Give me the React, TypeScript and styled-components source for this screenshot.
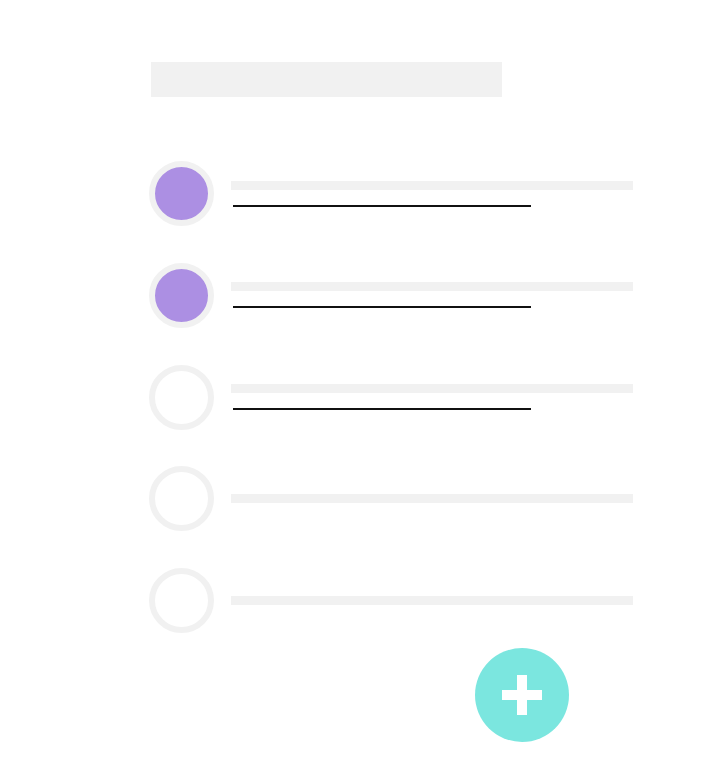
import React from "react";
import styled, { createGlobalStyle } from "styled-components";

const Global = createGlobalStyle`
  html, body { margin: 0; padding: 0; background: #ffffff; }
  body { font-family: "Liberation Sans", Arial, sans-serif; }
`;

const Page = styled.div`
  width: 711px;
  height: 765px;
  box-sizing: border-box;
  padding: 62px 0 0 151px;
  display: flex;
  flex-direction: column;
  overflow: hidden;
`;

const TitleBar = styled.div`
  width: 351px;
  height: 35px;
  background: #f1f1f1;
`;

const List = styled.ul`
  list-style: none;
  margin: 64px 0 0 -2.5px;
  padding: 0;
  display: flex;
  flex-direction: column;
  gap: 36.75px;
`;

const Row = styled.li`
  display: flex;
  align-items: center;
  gap: 17.5px;
`;

const Check = styled.div<{ $done: boolean }>`
  width: 65px;
  height: 65px;
  box-sizing: border-box;
  border-radius: 50%;
  border: 6px solid #f1f1f1;
  background: ${(p) => (p.$done ? "#ac8fe3" : "#ffffff")};
  flex: none;
`;

const Lines = styled.div`
  display: flex;
  flex-direction: column;
`;

const TextLine = styled.div`
  width: 402px;
  height: 9px;
  background: #f1f1f1;
`;

const Strike = styled.div`
  width: 298px;
  height: 2px;
  margin: 15px 0 0 1.5px;
  background: #111111;
`;

const Footer = styled.div`
  display: flex;
  padding-left: 323.5px;
  margin-top: 15px;
`;

const Fab = styled.button`
  width: 94px;
  height: 94px;
  border-radius: 50%;
  border: none;
  padding: 0;
  background: #7be6df;
  display: flex;
  align-items: center;
  justify-content: center;
  cursor: pointer;
`;

const tasks = [
  { done: true, struck: true },
  { done: true, struck: true },
  { done: false, struck: true },
  { done: false, struck: false },
  { done: false, struck: false },
];

export default function App() {
  return (
    <>
      <Global />
      <Page>
        <TitleBar />
        <List>
          {tasks.map((t, i) => (
            <Row key={i}>
              <Check $done={t.done} />
              <Lines>
                <TextLine />
                {t.struck && <Strike />}
              </Lines>
            </Row>
          ))}
        </List>
        <Footer>
          <Fab aria-label="Add">
            <svg width="40" height="40" viewBox="0 0 40 40">
              <rect x="15" y="0" width="10" height="40" fill="#ffffff" />
              <rect x="0" y="15" width="40" height="10" fill="#ffffff" />
            </svg>
          </Fab>
        </Footer>
      </Page>
    </>
  );
}
